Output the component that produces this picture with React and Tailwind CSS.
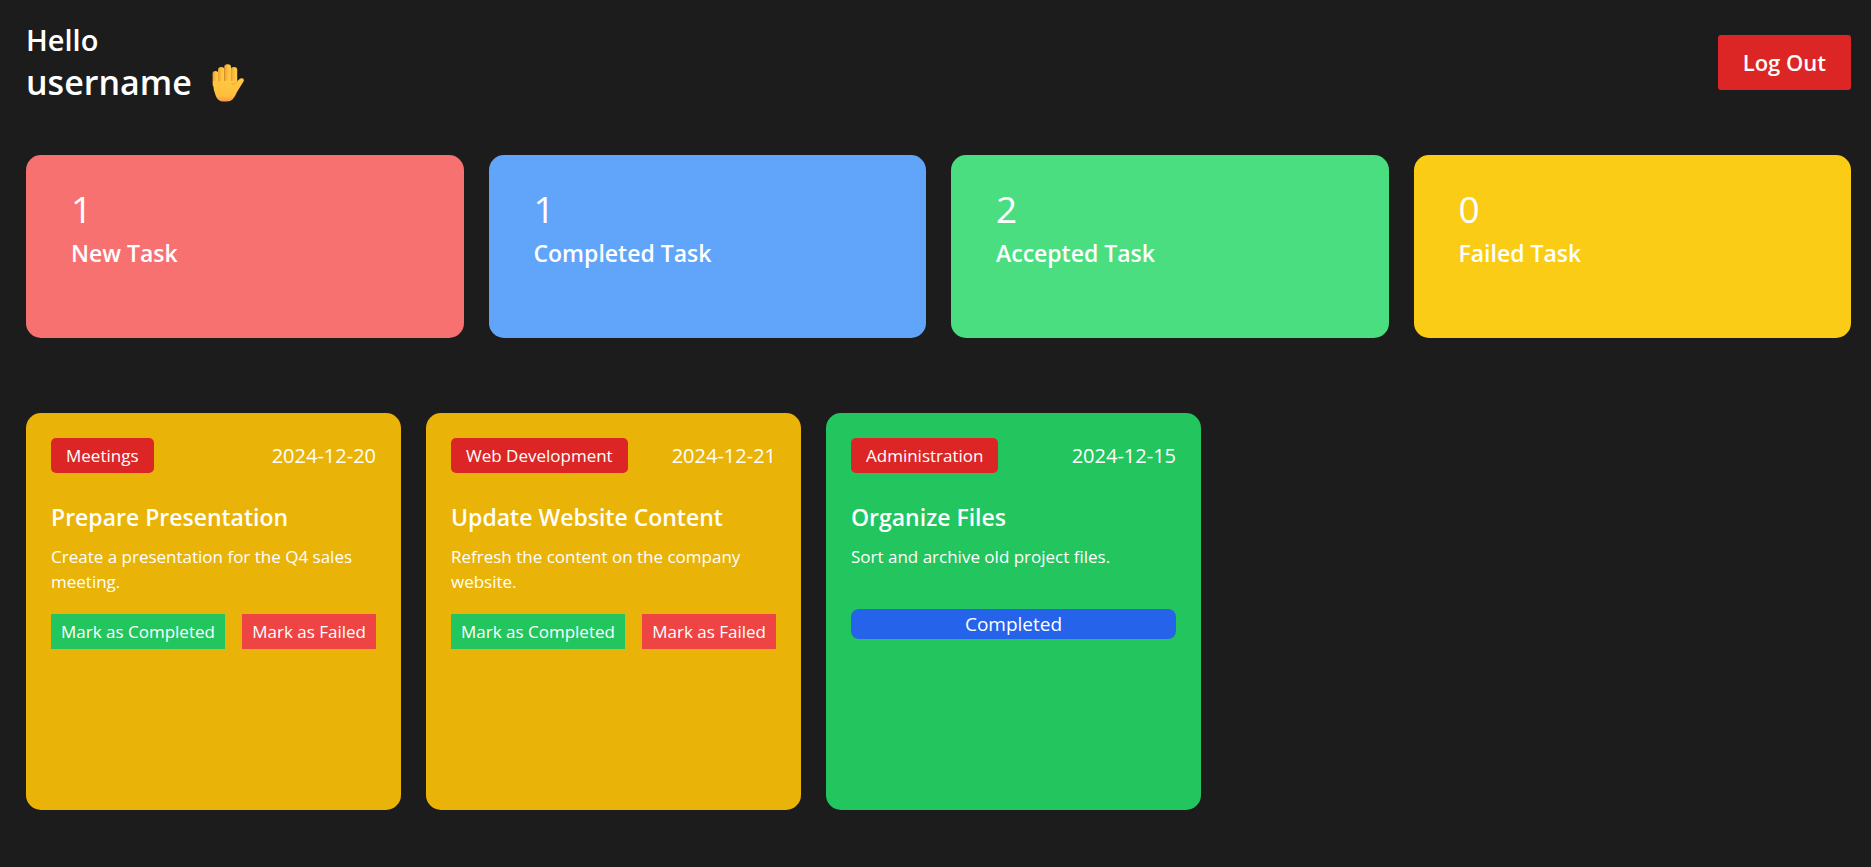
const stats = [
  { count: 1, label: "New Task", color: "bg-[#f87171]" },
  { count: 1, label: "Completed Task", color: "bg-[#60a5fa]" },
  { count: 2, label: "Accepted Task", color: "bg-[#4ade80]" },
  { count: 0, label: "Failed Task", color: "bg-[#facc15]" },
];

const tasks = [
  {
    category: "Meetings",
    date: "2024-12-20",
    title: "Prepare Presentation",
    description: "Create a presentation for the Q4 sales meeting.",
    status: "accepted",
  },
  {
    category: "Web Development",
    date: "2024-12-21",
    title: "Update Website Content",
    description: "Refresh the content on the company website.",
    status: "accepted",
  },
  {
    category: "Administration",
    date: "2024-12-15",
    title: "Organize Files",
    description: "Sort and archive old project files.",
    status: "completed",
  },
];

function RaisedHand() {
  return (
    <svg viewBox="0 0 32 38" className="h-[38px] w-8" role="img" aria-label="raised hand">
      <defs>
        <linearGradient id="palm" x1="0" y1="0" x2="0" y2="1">
          <stop offset="0" stopColor="#ffc843" />
          <stop offset="0.75" stopColor="#ffbf3d" />
          <stop offset="1" stopColor="#f8964c" />
        </linearGradient>
        <linearGradient id="finger" x1="0" y1="0" x2="1" y2="0">
          <stop offset="0" stopColor="#e89a2c" />
          <stop offset="0.4" stopColor="#fdb93a" />
          <stop offset="1" stopColor="#ffd24c" />
        </linearGradient>
      </defs>
      <rect x="0.600" y="7" width="5.800" height="16" rx="2.800" fill="url(#finger)" />
      <rect x="6" y="3" width="6.400" height="19" rx="3" fill="url(#finger)" />
      <rect x="12.200" y="0.300" width="6.800" height="20" rx="3.200" fill="url(#finger)" />
      <rect x="18.800" y="3" width="6.400" height="18" rx="3" fill="url(#finger)" />
      <path
        d="M.8 17.500Q3 16 6.200 17.500Q9 16 12.300 17Q15.500 15.500 18.900 17Q22 16 25 17.500L27 15.500Q29 13.500 31 14.500Q32.500 15.500 31.500 17.500L25 28Q23 33 20.500 35.500Q18.500 37.500 15 37.500H11Q6.500 37.500 4 32.500Q1.200 26 .8 17.500Z"
        fill="url(#palm)"
      />
      <path d="M19.500 20.500Q23 20.500 25.500 17" fill="none" stroke="#f0a634" strokeWidth="1" />
    </svg>
  );
}

function StatCard({ count, label, color }) {
  return (
    <div className={`min-w-0 flex-1 rounded-[15px] px-[45px] pt-[30px] pb-16 ${color}`}>
      <h2 className="text-[37px] leading-[48px]">{count}</h2>
      <h3 className="text-[23px] leading-[41px] font-semibold">{label}</h3>
    </div>
  );
}

function TaskCard({ task }) {
  const completed = task.status === "completed";
  return (
    <article
      className={`min-h-[397px] w-[375px] shrink-0 rounded-[15px] p-[25px] ${
        completed ? "bg-[#22c55e]" : "bg-[#eab308]"
      }`}
    >
      <div className="flex items-center justify-between">
        <span className="rounded-[5px] bg-[#dc2626] px-[15px] py-[5px] text-[17px] leading-[25px]">
          {task.category}
        </span>
        <time dateTime={task.date} className="text-[20px] leading-[30px]">
          {task.date}
        </time>
      </div>
      <h2 className="mt-[25px] text-[23px] leading-[38px] font-semibold">{task.title}</h2>
      <p className="mt-2 text-[17px] leading-[25px]">{task.description}</p>
      {completed ? (
        <button
          type="button"
          className="mt-[40px] block w-full rounded-[8px] bg-[#2563eb] text-[19px] leading-[30px]"
        >
          Completed
        </button>
      ) : (
        <div className="mt-5 flex justify-between">
          <button type="button" className="bg-[#22c55e] px-[10px] py-[5px] text-[17px] leading-[25px]">
            Mark as Completed
          </button>
          <button type="button" className="bg-[#ef4444] px-[10px] py-[5px] text-[17px] leading-[25px]">
            Mark as Failed
          </button>
        </div>
      )}
    </article>
  );
}

export default function App() {
  return (
    <div className="min-h-screen bg-[#1c1c1c] pt-5 pr-5 pb-[57px] pl-[26px] font-['Open_Sans','Noto_Sans',sans-serif] text-white">
      <header className="flex items-center justify-between">
        <h1 className="text-[29px] leading-[40px] font-semibold">
          Hello
          <span className="flex items-center gap-5 text-[34px] leading-[45px]">
            username
            <RaisedHand />
          </span>
        </h1>
        <button
          type="button"
          className="rounded-[3px] bg-[#dc2626] px-[25px] py-[10px] text-[22px] leading-[35px] font-semibold"
        >
          Log Out
        </button>
      </header>
      <section className="mt-[50px] flex gap-[25px]">
        {stats.map((stat) => (
          <StatCard key={stat.label} {...stat} />
        ))}
      </section>
      <section className="mt-[75px] flex gap-[25px] overflow-x-auto">
        {tasks.map((task) => (
          <TaskCard key={task.title} task={task} />
        ))}
      </section>
    </div>
  );
}
